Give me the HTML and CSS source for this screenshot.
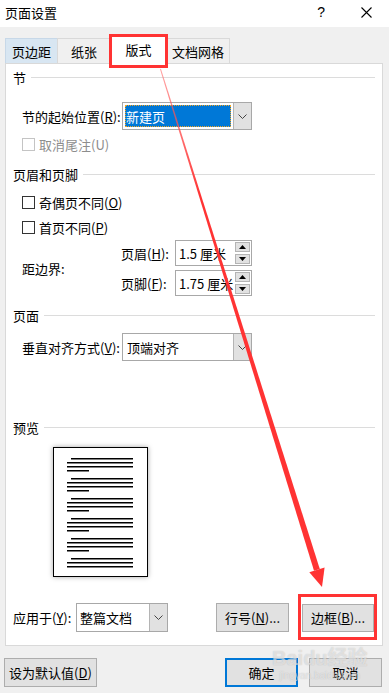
FILE: index.html
```html
<!DOCTYPE html>
<html lang="zh-CN">
<head>
    <meta charset="UTF-8">
    <meta name="viewport" content="width=device-width, initial-scale=1.0">
    <title>页面设置</title>
    <link rel="stylesheet" href="styles.css">
</head>
<body>
    <div class="dialog">
        <div class="titlebar">
            <span class="title">页面设置</span>
            <div class="title-btns">
                <span class="help">?</span>
                <svg class="close" width="11" height="11" viewBox="0 0 11 11">
                    <path d="M0.5 0.5 L10.5 10.5 M10.5 0.5 L0.5 10.5" stroke="#000" stroke-width="1.1" fill="none"/>
                </svg>
            </div>
        </div>

        <div class="tabs">
            <div class="tab tab-hover">页边距</div>
            <div class="tab">纸张</div>
            <div class="tab tab-active">版式<span class="mark mark-tab"></span></div>
            <div class="tab">文档网格</div>
        </div>

        <div class="panel">
            <div class="group-title g-section"><span>节</span><i></i></div>
            <div class="row r-start">
                <span class="label">节的起始位置(<u>R</u>):</span>
                <div class="combo">
                    <span class="combo-value"><span class="selected">新建页</span></span>
                    <span class="combo-btn"><svg width="9" height="5" viewBox="0 0 9 5"><path d="M0.5 0.5 L4.5 4.5 L8.5 0.5" stroke="#444" fill="none"/></svg></span>
                </div>
            </div>
            <div class="check r-endnote disabled"><span class="box"></span>取消尾注(U)</div>

            <div class="group-title g-header"><span>页眉和页脚</span><i></i></div>
            <div class="check r-odd"><span class="box"></span>奇偶页不同(<u>O</u>)</div>
            <div class="check r-first"><span class="box"></span>首页不同(<u>P</u>)</div>

            <div class="margins">
                <span class="edge-label">距边界:</span>
                <div class="spin-rows">
                    <div class="spin-row">
                        <span class="spin-label">页眉(<u>H</u>):</span>
                        <div class="spin">
                            <span class="spin-value">1.5 厘米</span>
                            <span class="spin-btns">
                                <span class="spin-btn"><svg width="7" height="4" viewBox="0 0 7 4"><path d="M0 4 L3.5 0 L7 4 Z" fill="#000"/></svg></span>
                                <span class="spin-btn"><svg width="7" height="4" viewBox="0 0 7 4"><path d="M0 0 L3.5 4 L7 0 Z" fill="#000"/></svg></span>
                            </span>
                        </div>
                    </div>
                    <div class="spin-row">
                        <span class="spin-label">页脚(<u>F</u>):</span>
                        <div class="spin">
                            <span class="spin-value">1.75 厘米</span>
                            <span class="spin-btns">
                                <span class="spin-btn"><svg width="7" height="4" viewBox="0 0 7 4"><path d="M0 4 L3.5 0 L7 4 Z" fill="#000"/></svg></span>
                                <span class="spin-btn"><svg width="7" height="4" viewBox="0 0 7 4"><path d="M0 0 L3.5 4 L7 0 Z" fill="#000"/></svg></span>
                            </span>
                        </div>
                    </div>
                </div>
            </div>

            <div class="group-title g-page"><span>页面</span><i></i></div>
            <div class="row r-valign">
                <span class="label">垂直对齐方式(<u>V</u>):</span>
                <div class="combo">
                    <span class="combo-value">顶端对齐</span>
                    <span class="combo-btn"><svg width="9" height="5" viewBox="0 0 9 5"><path d="M0.5 0.5 L4.5 4.5 L8.5 0.5" stroke="#444" fill="none"/></svg></span>
                </div>
            </div>

            <div class="group-title g-preview"><span>预览</span><i></i></div>
            <div class="preview">
                <svg width="93" height="128" viewBox="0 0 93 128">
                    <g fill="#000">
                        <rect x="17" y="10" width="62" height="1.5"/><rect x="13" y="14" width="66" height="1.5"/><rect x="13" y="18" width="66" height="1.5"/><rect x="13" y="22" width="22" height="1.5"/>
                        <rect x="17" y="30" width="62" height="1.5"/><rect x="13" y="34" width="66" height="1.5"/><rect x="13" y="38" width="66" height="1.5"/><rect x="13" y="42" width="22" height="1.5"/>
                        <rect x="17" y="50" width="62" height="1.5"/><rect x="13" y="54" width="66" height="1.5"/><rect x="13" y="58" width="66" height="1.5"/><rect x="13" y="62" width="22" height="1.5"/>
                        <rect x="17" y="70" width="62" height="1.5"/><rect x="13" y="74" width="66" height="1.5"/><rect x="13" y="78" width="66" height="1.5"/><rect x="13" y="82" width="22" height="1.5"/>
                        <rect x="17" y="90" width="62" height="1.5"/><rect x="13" y="94" width="66" height="1.5"/><rect x="13" y="98" width="66" height="1.5"/><rect x="13" y="102" width="22" height="1.5"/>
                        <rect x="17" y="110" width="62" height="1.5"/><rect x="13" y="114" width="66" height="1.5"/><rect x="13" y="118" width="66" height="1.5"/>
                    </g>
                </svg>
            </div>

            <div class="apply-row">
                <span class="apply-label">应用于(<u>Y</u>):</span>
                <div class="combo combo-apply">
                    <span class="combo-value">整篇文档</span>
                    <span class="combo-btn"><svg width="9" height="5" viewBox="0 0 9 5"><path d="M0.5 0.5 L4.5 4.5 L8.5 0.5" stroke="#444" fill="none"/></svg></span>
                </div>
                <button class="btn btn-lines">行号(<u>N</u>)...</button>
                <button class="btn btn-border">边框(<u>B</u>)...<span class="mark mark-btn"></span></button>
            </div>
        </div>

        <div class="footer">
            <button class="btn btn-default">设为默认值(<u>D</u>)</button>
            <div class="footer-right">
                <button class="btn btn-ok">确定</button>
                <button class="btn btn-cancel">取消</button>
            </div>
        </div>

        <!-- annotation arrow drawn over the dialog -->
        <svg class="arrow" width="389" height="693" viewBox="0 0 389 693">
            <defs>
                <linearGradient id="fade" x1="160" y1="68" x2="320" y2="580" gradientUnits="userSpaceOnUse">
                    <stop offset="0" stop-color="#f66" stop-opacity="0.6"/>
                    <stop offset="0.25" stop-color="#f33"/>
                    <stop offset="1" stop-color="#f33"/>
                </linearGradient>
            </defs>
            <polygon points="160.9,68.8 160,69.2 314.0,570.7 319.8,568.9" fill="url(#fade)"/>
            <polygon points="309.3,572.2 324.6,567.4 322,587" fill="#f33"/>
        </svg>

        <div class="watermark">
            <span class="wm-big">Bai<b>du</b>经验</span>
            <span class="wm-small">jingyan.baidu.com</span>
        </div>
    </div>
</body>
</html>
```

FILE: styles.css
```css
body {
    margin: 0;
    padding: 0;
    background: #f0f0f0;
    font-family: "Noto Sans CJK SC", "Liberation Sans", sans-serif;
    font-size: 12px;
    color: #000;
}
.dialog {
    position: relative;
    width: 389px;
    height: 693px;
    overflow: hidden;
}
u {
    text-decoration: underline;
    text-underline-offset: 1px;
}

/* title bar */
.titlebar {
    height: 27px;
    background: #fff;
    display: flex;
    align-items: center;
    justify-content: space-between;
    padding: 0 17px 0 5px;
}
.title {
    font-size: 13px;
    margin-top: -3px;
}
.title-btns {
    display: flex;
    align-items: center;
    gap: 36px;
    margin-top: -3px;
}
.help {
    font-family: "Liberation Sans", sans-serif;
    font-size: 14px;
}

/* tabs */
.tabs {
    display: flex;
    align-items: flex-end;
    padding-left: 5px;
    margin-top: 8px;
    height: 28px;
}
.tab {
    position: relative;
    box-sizing: border-box;
    height: 25px;
    border: 1px solid #d9d9d9;
    border-bottom: none;
    margin-left: -1px;
    display: flex;
    align-items: center;
    justify-content: center;
    font-size: 13px;
}
.tab:nth-child(1) { width: 53px; margin-left: 0; }
.tab:nth-child(2) { width: 54px; }
.tab:nth-child(3) { width: 57px; }
.tab:nth-child(4) { width: 64px; }
.tab-hover {
    background: #d8e6f2;
    border-color: #c7d8e8;
}
.tab-active {
    background: #fff;
    z-index: 1;
    padding-bottom: 2px;
    margin-bottom: -1px;
    height: 29px;
}
.mark {
    position: absolute;
    border: 3px solid #f33;
    box-sizing: border-box;
    pointer-events: none;
}
.mark-tab {
    left: -2px;
    top: -2px;
    width: 59px;
    height: 34px;
}

/* main panel */
.panel {
    box-sizing: border-box;
    margin-left: 5px;
    width: 378px;
    height: 583px;
    background: #fff;
    border: 1px solid #d9d9d9;
    padding: 0 7px 0 7px;
}
.group-title {
    display: flex;
    align-items: center;
    gap: 5px;
    height: 20px;
    font-size: 13px;
}
.group-title i {
    flex: 1;
    height: 1px;
    background: #dcdcdc;
}
.g-section { margin-top: 3px; }
.g-header { margin-top: 12px; }
.g-page { margin-top: 9px; }
.g-preview { margin-top: 56px; }

.row {
    display: flex;
    align-items: center;
    padding-left: 9px;
}
.label {
    width: 100px;
    font-size: 13px;
    white-space: nowrap;
}
.r-start { margin-top: 15px; }
.r-valign { margin-top: 8px; }

.combo {
    box-sizing: border-box;
    width: 130px;
    height: 28px;
    border: 1px solid #a8a8a8;
    display: flex;
    background: #fff;
}
.combo-value {
    flex: 1;
    display: flex;
    align-items: center;
    padding: 2px;
    font-size: 13px;
}
.combo-value .selected {
    flex: 1;
    align-self: stretch;
    display: flex;
    align-items: center;
    background: #0078d7;
    color: #fff;
    outline: 1px dotted #f5a623;
    outline-offset: -1px;
    padding-left: 1px;
}
.r-valign .combo-value { padding-left: 4px; }
.combo-btn {
    width: 17px;
    background: #e1e1e1;
    border-left: 1px solid #b4b4b4;
    display: flex;
    align-items: center;
    justify-content: center;
}

.check {
    display: flex;
    align-items: center;
    height: 16px;
    padding-left: 9px;
    font-size: 13px;
}
.check .box {
    box-sizing: border-box;
    width: 13px;
    height: 13px;
    border: 1px solid #333;
    background: #fff;
    margin-right: 4px;
}
.check.disabled {
    color: #8d8d8d;
}
.check.disabled .box {
    border-color: #c4c4c4;
}
.r-endnote { margin-top: 6px; }
.r-odd { margin-top: 10px; }
.r-first { margin-top: 9px; }

/* header / footer distance */
.margins {
    display: flex;
    align-items: center;
    padding-left: 9px;
    margin-top: 5px;
}
.edge-label {
    width: 99px;
    font-size: 13px;
}
.spin-rows {
    display: flex;
    flex-direction: column;
    gap: 4px;
}
.spin-row {
    display: flex;
    align-items: center;
}
.spin-label {
    width: 54px;
    font-size: 13px;
}
.spin {
    box-sizing: border-box;
    width: 77px;
    height: 26px;
    border: 1px solid #a8a8a8;
    display: flex;
    align-items: center;
}
.spin-value {
    flex: 1;
    padding-left: 3px;
    font-size: 13px;
}
.spin-btns {
    display: flex;
    flex-direction: column;
    gap: 2px;
    margin-right: 1px;
}
.spin-btn {
    box-sizing: border-box;
    width: 15px;
    height: 10px;
    background: #e1e1e1;
    border: 1px solid #b4b4b4;
    display: flex;
    align-items: center;
    justify-content: center;
}

/* preview */
.preview {
    margin: 10px 0 0 40px;
    width: 93px;
    height: 128px;
    border: 1px solid #000;
    background: #fff;
    box-shadow: 0 0 5px rgba(0, 0, 0, 0.35);
}
.preview svg {
    display: block;
}

/* apply row */
.apply-row {
    display: flex;
    align-items: center;
    margin-top: 26px;
    height: 29px;
}
.apply-label {
    width: 63px;
    font-size: 13px;
}
.combo-apply {
    width: 92px;
    height: 29px;
}
.combo-apply .combo-value { padding-left: 3px; }

.btn {
    position: relative;
    box-sizing: border-box;
    height: 29px;
    background: #e1e1e1;
    border: 1px solid #adadad;
    font-family: "Noto Sans CJK SC", "Liberation Sans", sans-serif;
    font-size: 13px;
    color: #000;
    padding: 0;
}
.btn-lines {
    width: 73px;
    margin-left: 48px;
}
.btn-border {
    width: 72px;
    height: 28px;
    margin-left: 13px;
}
.mark-btn {
    left: -5px;
    top: -11px;
    width: 79px;
    height: 46px;
}

/* footer */
.footer {
    display: flex;
    justify-content: space-between;
    padding: 0 7px 0 4px;
    margin-top: 12px;
}
.footer-right {
    display: flex;
    gap: 11px;
}
.btn-default {
    width: 93px;
}
.btn-ok {
    width: 73px;
    border: 2px solid #0078d7;
}
.btn-cancel {
    width: 73px;
}

/* overlays */
.arrow {
    position: absolute;
    left: 0;
    top: 0;
    pointer-events: none;
}
.watermark {
    position: absolute;
    left: 272px;
    top: 646px;
    display: flex;
    flex-direction: column;
    align-items: center;
    color: rgba(255, 255, 255, 0.55);
    text-shadow: 0 0 1px rgba(120, 120, 120, 0.45);
    pointer-events: none;
    font-family: "Liberation Sans", "Noto Sans CJK SC", sans-serif;
}
.wm-big {
    font-size: 20px;
    font-weight: bold;
    line-height: 24px;
}
.wm-small {
    font-size: 10px;
    line-height: 12px;
}
```
